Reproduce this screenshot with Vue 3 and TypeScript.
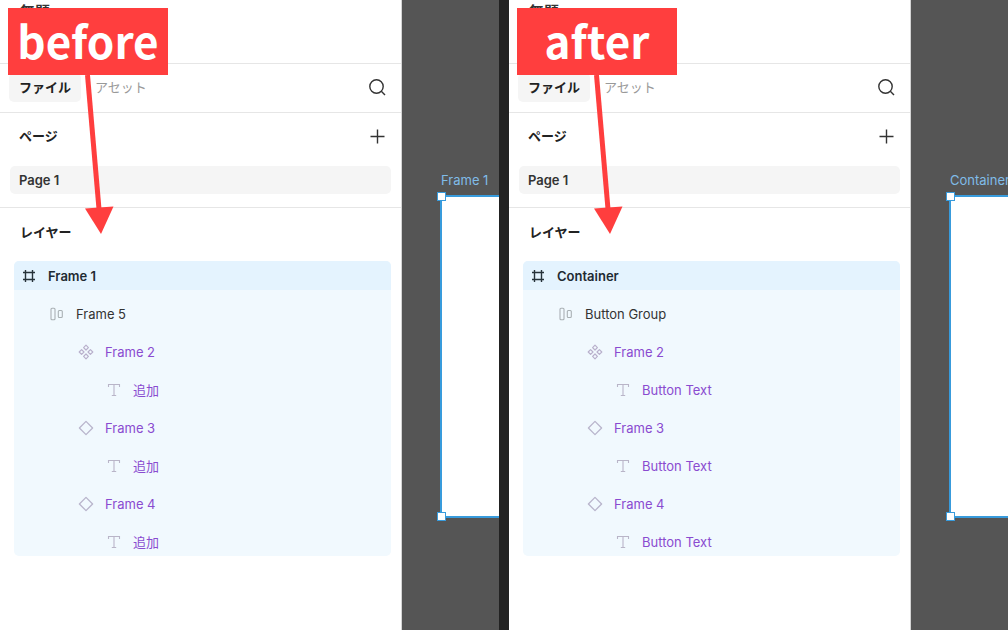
<script setup lang="ts">
type IconKind = 'frame' | 'layout' | 'component' | 'instance' | 'text'

interface Layer {
  name: string
  icon: IconKind
  depth: number
}

interface Pane {
  id: string
  label: string
  frame: string
  layers: Layer[]
}

function buildLayers(root: string, group: string, text: string): Layer[] {
  return [
    { name: root, icon: 'frame', depth: 0 },
    { name: group, icon: 'layout', depth: 1 },
    { name: 'Frame 2', icon: 'component', depth: 2 },
    { name: text, icon: 'text', depth: 3 },
    { name: 'Frame 3', icon: 'instance', depth: 2 },
    { name: text, icon: 'text', depth: 3 },
    { name: 'Frame 4', icon: 'instance', depth: 2 },
    { name: text, icon: 'text', depth: 3 },
  ]
}

const panes: Pane[] = [
  { id: 'before', label: 'before', frame: 'Frame 1', layers: buildLayers('Frame 1', 'Frame 5', '追加') },
  { id: 'after', label: 'after', frame: 'Container', layers: buildLayers('Container', 'Button Group', 'Button Text') },
]
</script>

<template>
  <main class="comparison">
    <section v-for="pane in panes" :key="pane.id" class="pane" :aria-label="pane.label">
      <aside class="sidebar">
        <header class="file-header">
          <h1 class="file-title">無題</h1>
        </header>

        <nav class="tabs">
          <button type="button" class="tab tab-active">ファイル</button>
          <button type="button" class="tab">アセット</button>
          <button type="button" class="icon-button" aria-label="検索">
            <svg width="20" height="20" viewBox="0 0 20 20" fill="none" stroke="#333" stroke-width="1.4">
              <circle cx="9.500" cy="8.500" r="6.700" />
              <path d="M14.300 13.300 18 17" />
            </svg>
          </button>
        </nav>

        <section class="pages">
          <div class="section-head">
            <h2 class="section-title">ページ</h2>
            <button type="button" class="icon-button" aria-label="ページを追加">
              <svg width="20" height="20" viewBox="0 0 20 20" fill="none" stroke="#333" stroke-width="1.4">
                <path d="M10.5 3.5v14M3.5 10.5h14" />
              </svg>
            </button>
          </div>
          <button type="button" class="page-item">Page 1</button>
        </section>

        <section class="layers">
          <h2 class="section-title">レイヤー</h2>
          <ul class="layer-list">
            <li v-for="(layer, i) in pane.layers" :key="i">
              <button
                type="button"
                class="layer"
                :class="['depth-' + layer.depth, { selected: layer.depth === 0 }]"
              >
                <svg class="layer-icon" width="16" height="16" viewBox="0 0 16 16" fill="none" aria-hidden="true">
                  <path v-if="layer.icon === 'frame'" d="M4.500 2v12M11.500 2v12M2 4.500h12M2 11.500h12" stroke="#26323a" stroke-width="1.4" />
                  <g v-else-if="layer.icon === 'layout'" stroke="#a9b0b4" stroke-width="1.1">
                    <rect x="2" y="2.3" width="4" height="11.4" rx="1" />
                    <rect x="9.3" y="4.5" width="4" height="7" rx="1" />
                  </g>
                  <g v-else-if="layer.icon === 'component'" stroke="#b9b0cc" stroke-width="1.2" stroke-linejoin="round">
                    <path d="M8 1.200 10.400 3.600 8 6 5.600 3.600Z" />
                    <path d="M8 10 10.400 12.400 8 14.800 5.600 12.400Z" />
                    <path d="M3.600 5.600 6 8 3.600 10.400 1.200 8Z" />
                    <path d="M12.400 5.600 14.800 8 12.400 10.400 10 8Z" />
                  </g>
                  <path
                    v-else-if="layer.icon === 'instance'"
                    d="M8 1.4 14.6 8 8 14.6 1.4 8Z"
                    stroke="#b9b5cc"
                    stroke-width="1.3"
                    stroke-linejoin="round"
                  />
                  <path v-else d="M2.5 5V2.5h11V5M8 2.5v11M5.8 13.5h4.4" stroke="#b9b5c8" stroke-width="1.1" />
                </svg>
                <span>{{ layer.name }}</span>
              </button>
            </li>
          </ul>
        </section>
      </aside>

      <div class="canvas">
        <div class="artboard-name">{{ pane.frame }}</div>
        <div class="artboard">
          <span class="handle handle-top"></span>
          <span class="handle handle-bottom"></span>
        </div>
      </div>

      <div class="callout">
        <div class="callout-label">{{ pane.label }}</div>
        <svg class="callout-arrow" width="160" height="160" viewBox="0 0 160 160" aria-hidden="true">
          <path d="M79.5 0 91 134" stroke="#ff3e3e" stroke-width="5" />
          <path d="M77 133.500 105.500 131.500 93 159Z" fill="#ff3e3e" />
        </svg>
      </div>
    </section>
  </main>
</template>

<style>
body {
  margin: 0;
}
</style>

<style scoped>
.comparison {
  display: grid;
  grid-template-columns: minmax(0, 1fr) minmax(0, 1fr);
  column-gap: 10px;
  min-height: 100vh;
  background: #222;
  font-family: Inter, 'Noto Sans CJK JP', sans-serif;
  font-size: 13px;
  line-height: 20px;
  color: #333;
}

button {
  border: 0;
  padding: 0;
  background: none;
  font: inherit;
  color: inherit;
  text-align: left;
}

.pane {
  position: relative;
  display: flex;
  overflow: hidden;
}

.sidebar {
  box-sizing: border-box;
  flex: 0 0 402px;
  border-right: 1px solid #d4d4d4;
  background: #fff;
}

.file-header {
  box-sizing: border-box;
  height: 64px;
  padding: 2px 20px;
  border-bottom: 1px solid #e6e6e6;
}

.file-title {
  margin: 0;
  font-size: 15px;
  font-weight: 700;
}

.tabs {
  display: flex;
  align-items: center;
  padding: 9px 14px 10px 9px;
  border-bottom: 1px solid #e6e6e6;
}

.tab {
  padding: 4px 10px 5px;
  border-radius: 5px;
  color: #999;
}

.tab-active {
  margin-right: 4px;
  background: #f5f5f5;
  color: #222;
  font-weight: 700;
}

.icon-button {
  display: flex;
  margin-left: auto;
}

.pages {
  padding: 13px 10px 13px;
  border-bottom: 1px solid #e6e6e6;
}

.section-head {
  display: flex;
  align-items: center;
  padding: 0 4px 0 9px;
  margin-bottom: 20px;
}

.section-title {
  margin: 0;
  font-size: 13px;
  font-weight: 600;
  color: #222;
}

.page-item {
  display: block;
  width: 100%;
  padding: 4px 9px;
  border-radius: 5px;
  background: #f5f5f5;
  font-weight: 600;
}

.layers {
  padding: 14px 10px 0 14px;
}

.layers .section-title {
  padding-left: 6px;
}

.layer-list {
  display: flex;
  flex-direction: column;
  gap: 9px;
  margin: 19px 0 0;
  padding: 0;
  border-radius: 5px;
  background: #f1f9fe;
  list-style: none;
  overflow: hidden;
}

.layer {
  display: flex;
  align-items: center;
  gap: 11px;
  box-sizing: border-box;
  width: 100%;
  height: 29px;
  padding-left: 7px;
  color: #8a4bd0;
}

.selected {
  background: #e4f3fe;
  color: #1e2a32;
  font-weight: 600;
}

.depth-1 {
  padding-left: 35px;
  color: #333;
}

.depth-2 {
  padding-left: 64px;
}

.depth-3 {
  padding-left: 92px;
}

.canvas {
  flex: 1;
  min-width: 0;
  padding: 170px 0 0 38px;
  background: #555;
}

.artboard-name {
  padding-left: 1px;
  color: #80bce8;
  white-space: nowrap;
}

.artboard {
  position: relative;
  box-sizing: border-box;
  height: 323px;
  margin-top: 5px;
  border: 2px solid #389bdc;
  border-right: 0;
  background: #fff;
}

.handle {
  position: absolute;
  left: -5px;
  box-sizing: border-box;
  width: 9px;
  height: 9px;
  border: 1px solid #389bdc;
  background: #fff;
}

.handle-top {
  top: -5px;
}

.handle-bottom {
  bottom: -5px;
}

.callout {
  position: absolute;
  top: 8px;
  left: 8px;
  width: 160px;
}

.callout-label {
  box-sizing: border-box;
  height: 67px;
  background: #ff3e3e;
  color: #fff;
  font-family: 'Noto Sans CJK JP', sans-serif;
  font-size: 44px;
  font-weight: 700;
  line-height: 64px;
  text-align: center;
}

.callout-arrow {
  display: block;
}
</style>
